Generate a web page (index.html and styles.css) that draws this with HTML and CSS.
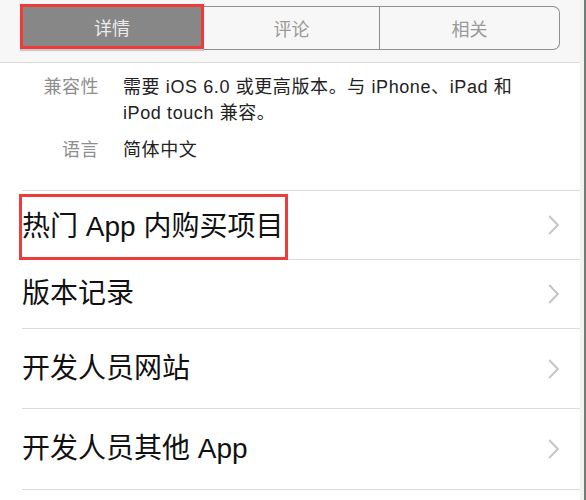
FILE: index.html
```html
<!DOCTYPE html>
<html lang="zh-CN">
<head>
<meta charset="utf-8">
<title>详情</title>
<link rel="stylesheet" href="styles.css">
</head>
<body>
<div class="page">
  <div class="content">
    <header class="header">
      <div class="segmented">
        <div class="seg seg-active">详情</div>
        <div class="seg seg-mid">评论</div>
        <div class="seg seg-last">相关</div>
      </div>
    </header>
    <section class="info">
      <div class="info-row">
        <div class="info-label">兼容性</div>
        <div class="info-value">需要 iOS 6.0 或更高版本。与 iPhone、iPad 和<br>iPod touch 兼容。</div>
      </div>
      <div class="info-row">
        <div class="info-label">语言</div>
        <div class="info-value">简体中文</div>
      </div>
    </section>
    <ul class="list">
      <li class="row row-short">
        <span class="row-title row-marked">热门 App 内购买项目</span>
        <svg class="chevron" width="11" height="20" viewBox="0 0 11 20"><polyline points="1.2,1 9.8,10 1.2,19" /></svg>
      </li>
      <li class="row row-short">
        <span class="row-title">版本记录</span>
        <svg class="chevron" width="11" height="20" viewBox="0 0 11 20"><polyline points="1.2,1 9.8,10 1.2,19" /></svg>
      </li>
      <li class="row row-tall">
        <span class="row-title">开发人员网站</span>
        <svg class="chevron" width="11" height="20" viewBox="0 0 11 20"><polyline points="1.2,1 9.8,10 1.2,19" /></svg>
      </li>
      <li class="row row-taller">
        <span class="row-title">开发人员其他 App</span>
        <svg class="chevron" width="11" height="20" viewBox="0 0 11 20"><polyline points="1.2,1 9.8,10 1.2,19" /></svg>
      </li>
    </ul>
  </div>
  <div class="edge-light"></div>
  <div class="edge-dark"></div>
</div>
</body>
</html>
```
FILE: styles.css
```css
* { box-sizing: border-box; }
html, body { margin: 0; padding: 0; background: #ffffff; }
body {
  font-family: "Liberation Sans", "Noto Sans CJK SC", sans-serif;
  color: #111;
}
.page {
  display: flex;
  width: 586px;
  height: 500px;
  overflow: hidden;
}
.content { flex: 1; min-width: 0; background: #fff; }
.edge-light { width: 4px; background: #f3f3f3; }
.edge-dark { width: 2px; background: #6f7f73; }

.header {
  height: 63px;
  background: #f7f7f7;
  border-bottom: 1px solid #d9d9d9;
  padding: 6px 0 0 20px;
}
.segmented {
  display: flex;
  width: 540px;
  height: 44px;
}
.seg {
  display: flex;
  align-items: center;
  justify-content: center;
  font-size: 18px;
  color: #9a9a9a;
  background: #f7f7f7;
  border-top: 1px solid #8f8f8f;
  border-bottom: 1px solid #8f8f8f;
}
.seg-active {
  width: 184px;
  height: 45px;
  margin-top: -2px;
  background: #878787;
  color: #ececec;
  border: 3px solid #f03b3b;
  box-shadow: 0 2px 1px rgba(0, 0, 0, 0.18);
  position: relative;
  z-index: 1;
}
.seg-mid {
  width: 176px;
  border-right: 1px solid #8f8f8f;
}
.seg-last {
  width: 180px;
  border-right: 1px solid #8f8f8f;
  border-radius: 0 7px 7px 0;
}

.info {
  padding: 11px 0 27px 0;
  display: flex;
  flex-direction: column;
  gap: 11px;
}
.info-row {
  display: flex;
  font-size: 18px;
  line-height: 26px;
}
.info-label {
  width: 100px;
  text-align: right;
  color: #8e8e8e;
  padding-right: 1px;
  letter-spacing: 0.5px;
}
.info-value {
  margin-left: 23px;
  color: #222;
  letter-spacing: 0.6px;
  white-space: nowrap;
}

.list {
  list-style: none;
  margin: 0 0 0 22px;
  padding: 0;
  border-top: 1px solid #dcdcdc;
}
.row {
  display: flex;
  align-items: center;
  justify-content: space-between;
  border-bottom: 1px solid #dcdcdc;
  padding-right: 21px;
}
.row-short { height: 69px; }
.row-tall { height: 80px; }
.row-taller { height: 81px; }
.row-title {
  font-size: 28px;
  color: #111;
  line-height: 40px;
  white-space: nowrap;
}
.row-marked {
  display: inline-block;
  margin-left: -3px;
  margin-top: 4px;
  padding: 8px 0 8px 0;
  height: 66px;
  width: 269px;
  border: 3px solid #f03b3b;
  line-height: 44px;
}
.chevron polyline {
  fill: none;
  stroke: #c6c6ca;
  stroke-width: 2;
}
```
